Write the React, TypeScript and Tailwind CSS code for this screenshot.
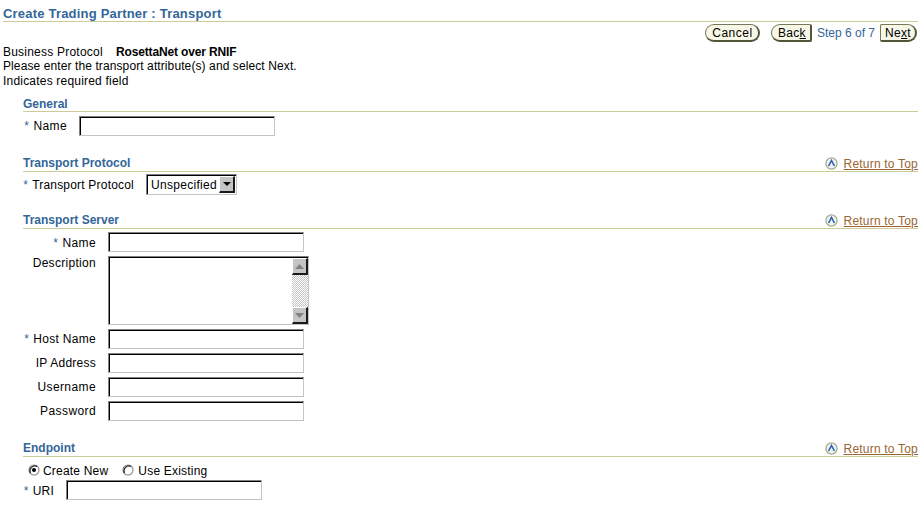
import type { ReactNode } from 'react';

const bevel = 'border border-t-[#808080] border-l-[#808080] border-r-[#c4c4c4] border-b-[#c4c4c4] shadow-[inset_1px_1px_0_#000]';
const btn = 'h-[18px] border border-[#77775a] border-r-2 border-b-2 border-r-[#55553a] border-b-[#55553a] bg-[#f7f7e7] leading-[14px]';

function TopLink() {
  return (
    <div className="-mb-[1px] flex items-center gap-[6px]">
      <svg width="13" height="13" viewBox="0 0 13 13">
        <circle cx="6.5" cy="6.5" r="5.6" fill="#eef3f7" stroke="#a8ad8c" strokeWidth="1.3" />
        <path d="M3.6 9 L6.5 3.4 L9.4 9" fill="none" stroke="#2f62a8" strokeWidth="1.6" />
      </svg>
      <a className="mt-[2px] text-[12px] leading-[14px] tracking-[0.2px] text-[#996633] underline">Return to Top</a>
    </div>
  );
}

function SectionHead({ title, link = true, tight }: { title: string; link?: boolean; tight?: boolean }) {
  return (
    <div className={`ml-[23px] mr-[5px] flex items-end justify-between border-b border-[#cccc99] ${tight ? 'h-[16px]' : 'h-[17px] pb-[1px]'}`}>
      <span className="text-[12px] leading-[14px] font-bold text-[#336699]">{title}</span>
      {link && <TopLink />}
    </div>
  );
}

function Req() {
  return <span className="mr-[4px] text-[12px] text-[#336699]">*</span>;
}

function TextBox() {
  return <input type="text" className={`h-[20px] w-[196px] bg-white ${bevel}`} />;
}

function Row({ label, req, width, labelClass = 'tracking-[0.4px]', children }: { label: string; req?: boolean; width: string; labelClass?: string; children: ReactNode }) {
  return (
    <div className="flex items-center">
      <div className={`${width} ${labelClass} pr-[12px] text-right text-[12px] leading-[14px] whitespace-nowrap`}>
        {req && <Req />}
        {label}
      </div>
      {children}
    </div>
  );
}

function Radio({ on }: { on?: boolean }) {
  return (
    <svg className="mb-[2px]" width="12" height="12" viewBox="0 0 12 12">
      <circle cx="6" cy="6" r="5" fill="white" stroke="#888" strokeWidth="1.1" />
      <path d="M2.4 9 A5 5 0 0 1 9 2.4" fill="none" stroke="#222" strokeWidth="1.2" />
      {on && <circle cx="6" cy="6" r="2" fill="#000" />}
    </svg>
  );
}

function ScrollBtn({ up }: { up?: boolean }) {
  return (
    <div className="flex h-[17px] w-[16px] items-center justify-center border-t border-r-2 border-b-2 border-l border-t-white border-r-[#1a1a1a] border-b-[#1a1a1a] border-l-white bg-[#c4c4c4]">
      <svg width="9" height="5" viewBox="0 0 9 5">
        <path d={up ? 'M4.5 0 L9 5 L0 5 Z' : 'M0 0 L9 0 L4.5 5 Z'} fill="#808080" />
      </svg>
    </div>
  );
}

export default function App() {
  return (
    <div className="h-[508px] w-[923px] overflow-hidden bg-white font-['Liberation_Sans',Arial,sans-serif] text-black">
      {/* Titulo */}
      <div className="mr-[5px] ml-[3px] h-[22px] border-b border-[#cccc99] pt-[6px]">
        <h1 className="text-[13px] leading-[15px] font-bold tracking-[0.2px] text-[#336699]">Create Trading Partner : Transport</h1>
      </div>

      {/* Botones */}
      <div className="mr-[6px] flex h-[22px] items-start justify-end pt-[2px] text-[12px]">
        <button className={`${btn} mr-[11px] w-[55px] rounded-[9px] pl-[1px] tracking-[0.5px]`}>Cancel</button>
        <button className={`${btn} mr-[5px] w-[41px] rounded-l-[9px] rounded-r-[2px] pl-[2px] tracking-[0.3px]`}>Bac<span className="underline">k</span></button>
        <span className="mt-[2px] mr-[5px] leading-[14px] text-[#336699]">Step 6 of 7</span>
        <button className={`${btn} w-[37px] rounded-l-[2px] rounded-r-[9px] tracking-[0.3px]`}>Ne<span className="underline">x</span>t</button>
      </div>

      {/* Intro */}
      <div className="ml-[3px] text-[12px] leading-[15px] tracking-[0.15px]">
        <div className="flex h-[15px] items-end leading-[13px]">
          <span className="w-[113px] tracking-[0.22px]">Business Protocol</span>
          <span className="font-bold tracking-[-0.15px]">RosettaNet over RNIF</span>
        </div>
        <div className="tracking-[0.1px]">Please enter the transport attribute(s) and select Next.</div>
        <div className="tracking-[0.2px]">Indicates required field</div>
      </div>

      <div className="mt-[7px]">
        <SectionHead title="General" link={false} tight />
        <div className="mt-[4px]">
          <Row label="Name" req width="w-[79px]">
            <TextBox />
          </Row>
        </div>
      </div>

      <div className="mt-[19px]">
        <SectionHead title="Transport Protocol" />
        <div className="mt-[2px]">
          <Row label="Transport Protocol" req width="w-[146px]" labelClass="tracking-[0.2px]">
            <div className={`flex h-[21px] w-[91px] items-center bg-white pr-[1px] pl-[4px] text-[12px] tracking-[0.3px] ${bevel}`}>
              <span className="flex-1">Unspecified</span>
              <div className="flex h-[17px] w-[16px] items-center justify-center border-t border-r-2 border-b-2 border-l border-t-white border-r-[#1a1a1a] border-b-[#1a1a1a] border-l-white bg-[#c4c4c4]">
                <svg width="8" height="4" viewBox="0 0 8 4">
                  <path d="M0 0 L8 0 L4 4 Z" fill="#000" />
                </svg>
              </div>
            </div>
          </Row>
        </div>
      </div>

      <div className="mt-[17px]">
        <SectionHead title="Transport Server" />
        <div className="mt-[3px] flex flex-col gap-[4px]">
          <Row label="Name" req width="w-[108px]" labelClass="pt-[2px] tracking-[0.4px]">
            <TextBox />
          </Row>
          <div className="flex items-start">
            <div className="w-[108px] pr-[12px] text-right text-[12px] leading-[14px] tracking-[0.3px]">Description</div>
            <div className={`flex h-[69px] w-[201px] bg-white pt-[1px] ${bevel}`}>
              <div className="flex-1" />
              <div className="flex w-[16px] flex-col justify-between bg-[repeating-conic-gradient(#c4c4c4_0_25%,#ffffff_0_50%)] bg-[length:2px_2px]">
                <ScrollBtn up />
                <ScrollBtn />
              </div>
            </div>
          </div>
          <Row label="Host Name" req width="w-[108px]" labelClass="tracking-[0.3px]">
            <TextBox />
          </Row>
          <Row label="IP Address" width="w-[108px]" labelClass="tracking-[0.25px]">
            <TextBox />
          </Row>
          <Row label="Username" width="w-[108px]">
            <TextBox />
          </Row>
          <Row label="Password" width="w-[108px]">
            <TextBox />
          </Row>
        </div>
      </div>

      <div className="mt-[19px]">
        <SectionHead title="Endpoint" />
        <div className="mt-[6px] ml-[28px] flex h-[15px] items-center text-[12px] tracking-[0.2px]">
          <Radio on />
          <span className="ml-[3px]">Create New</span>
          <span className="ml-[14px] flex items-center"><Radio /></span>
          <span className="ml-[4px]">Use Existing</span>
        </div>
        <div className="mt-[2px]">
          <Row label="URI" req width="w-[66px]" labelClass="pt-[2px] tracking-[0.2px]">
            <TextBox />
          </Row>
        </div>
      </div>
    </div>
  );
}
